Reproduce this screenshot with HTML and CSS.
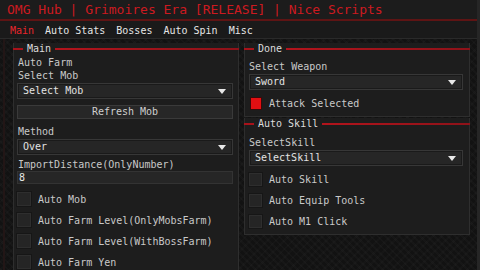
FILE: index.html
```html
<!DOCTYPE html>
<html>
<head>
<meta charset="utf-8">
<link rel="stylesheet" href="styles.css">
</head>
<body>
<div class="window">
  <div class="titlebar">OMG Hub | Grimoires Era [RELEASE] | Nice Scripts</div>
  <div class="tabs">
    <span class="tab active">Main</span>
    <span class="tab">Auto Stats</span>
    <span class="tab">Bosses</span>
    <span class="tab">Auto Spin</span>
    <span class="tab">Misc</span>
  </div>
  <div class="content">
    <div class="column">
      <div class="group">
        <div class="group-head"><span class="seg"></span><span class="glabel">Main</span><span class="seg grow"></span></div>
        <div class="group-body l-body">
          <div class="label">Auto Farm</div>
          <div class="label">Select Mob</div>
          <div class="dropdown"><span>Select Mob</span><span class="arrow"></span></div>
          <div class="button">Refresh Mob</div>
          <div class="label l-method">Method</div>
          <div class="dropdown"><span>Over</span><span class="arrow"></span></div>
          <div class="label l-import">ImportDistance(OnlyNumber)</div>
          <div class="input">8</div>
          <div class="check lc first"><span class="box"></span><span>Auto Mob</span></div>
          <div class="check lc"><span class="box"></span><span>Auto Farm Level(OnlyMobsFarm)</span></div>
          <div class="check lc"><span class="box"></span><span>Auto Farm Level(WithBossFarm)</span></div>
          <div class="check lc"><span class="box"></span><span>Auto Farm Yen</span></div>
        </div>
      </div>
    </div>
    <div class="column">
      <div class="group">
        <div class="group-head"><span class="seg"></span><span class="glabel">Done</span><span class="seg grow"></span></div>
        <div class="group-body r-body">
          <div class="label r-label">Select Weapon</div>
          <div class="dropdown"><span>Sword</span><span class="arrow"></span></div>
          <div class="check red-row"><span class="box on"></span><span>Attack Selected</span></div>
        </div>
      </div>
      <div class="group">
        <div class="group-head"><span class="seg"></span><span class="glabel">Auto Skill</span><span class="seg grow"></span></div>
        <div class="group-body r-body2">
          <div class="label r-label">SelectSkill</div>
          <div class="dropdown"><span>SelectSkill</span><span class="arrow"></span></div>
          <div class="check rc"><span class="box"></span><span>Auto Skill</span></div>
          <div class="check rc"><span class="box"></span><span>Auto Equip Tools</span></div>
          <div class="check rc"><span class="box"></span><span>Auto M1 Click</span></div>
        </div>
      </div>
    </div>
  </div>
</div>
</body>
</html>
```
FILE: styles.css
```css
* { box-sizing: border-box; }
html, body { margin: 0; padding: 0; }
body {
  width: 480px;
  height: 270px;
  overflow: hidden;
  background: #111111;
  font-family: "DejaVu Sans Mono", "Liberation Mono", monospace;
  color: #c9c9c9;
}
.window {
  width: 480px;
  height: 270px;
  background-color: #121212;
  background-image:
    repeating-linear-gradient(45deg, rgba(255,255,255,0.018) 0 2px, rgba(0,0,0,0) 2px 5px),
    repeating-linear-gradient(-45deg, rgba(255,255,255,0.015) 0 2px, rgba(0,0,0,0) 2px 6px);
  border-right: 3px solid #262626;
  display: flex;
  flex-direction: column;
  overflow: hidden;
}
.titlebar {
  flex: none;
  height: 21px;
  padding: 2px 0 0 7px;
  font-size: 13px;
  line-height: 16px;
  color: #cc1a20;
  background: #1c1c1c;
  border-bottom: 2px solid #5e1414;
  white-space: nowrap;
}
.tabs {
  flex: none;
  height: 18px;
  display: flex;
  gap: 11px;
  padding: 3px 0 0 10px;
  font-size: 10px;
  line-height: 14px;
  color: #e6e6e6;
  background: #1a1a1a;
  border-bottom: 1px solid #2a2a2a;
}
.tab.active { color: #e8262c; }
.content {
  flex: 1;
  min-height: 0;
  display: flex;
  gap: 5px;
  padding: 4px 0 0 8px;
  border-left: 2px solid #221616;
  margin-left: 3px;
}
.column {
  width: 226px;
  display: flex;
  flex-direction: column;
  gap: 1px;
}
.group {
  flex: none;
  display: flex;
  flex-direction: column;
  background: #1d1d1d;
  border: 1px solid #2e2e2e;
  border-top: none;
}
.group-head {
  flex: none;
  height: 12px;
  display: flex;
  align-items: center;
  margin-left: -1px;
  margin-right: -1px;
}
.seg {
  width: 10px;
  height: 2px;
  background: #a8121a;
}
.seg.grow {
  flex: 1;
  background: linear-gradient(90deg, #b3141c, #8e1219);
}
.glabel {
  font-size: 10px;
  line-height: 12px;
  padding: 0 4px;
  color: #dcdcdc;
}
.group-body {
  flex: none;
  font-size: 10px;
}
.l-body { height: 230px; padding: 1px 5px 0 3px; }
.r-body { height: 61px; padding: 5px 6px 0 4px; }
.r-body2 { height: 104px; padding: 6px 6px 0 4px; }
.label {
  height: 13px;
  line-height: 13px;
  padding-left: 1px;
  white-space: nowrap;
}
.r-label { padding-left: 0; }
.l-method { margin-top: 6px; }
.l-import { margin-top: 3px; }
.dropdown {
  height: 16px;
  margin-top: 1px;
  background: #262626;
  border: 1px solid #373737;
  box-shadow: inset 0 0 0 1px #1a1a1a;
  display: flex;
  align-items: center;
  justify-content: space-between;
  padding: 0 6px 0 5px;
  color: #e2e2e2;
  line-height: 14px;
}
.arrow {
  width: 0;
  height: 0;
  border-left: 4px solid transparent;
  border-right: 4px solid transparent;
  border-top: 5px solid #e8e8e8;
}
.button {
  height: 14px;
  margin-top: 6px;
  background: #272727;
  border: 1px solid #3a3a3a;
  text-align: center;
  line-height: 12px;
  color: #cfcfcf;
}
.input {
  height: 13px;
  background: #262626;
  border: 1px solid #333333;
  padding-left: 1px;
  line-height: 11px;
  color: #e6e6e6;
}
.check {
  display: flex;
  align-items: center;
  white-space: nowrap;
}
.lc {
  height: 16px;
  gap: 6px;
  margin-top: 5px;
  margin-left: -1px;
}
.lc.first { margin-top: 7px; }
.box {
  width: 16px;
  height: 16px;
  flex: none;
  background: #252525;
  border: 1px solid #161616;
  box-shadow: inset 0 0 0 1px #2e2e2e;
}
.red-row {
  height: 16px;
  margin-top: 5px;
  gap: 7px;
}
.box.on {
  width: 12px;
  height: 13px;
  background: #e30f12;
  border: 1px solid #3a0a0a;
  box-shadow: none;
  margin-left: 1px;
}
.rc {
  height: 15px;
  gap: 6px;
  margin-top: 6px;
  margin-left: -1px;
}
.rc .box { width: 15px; height: 15px; }
```
